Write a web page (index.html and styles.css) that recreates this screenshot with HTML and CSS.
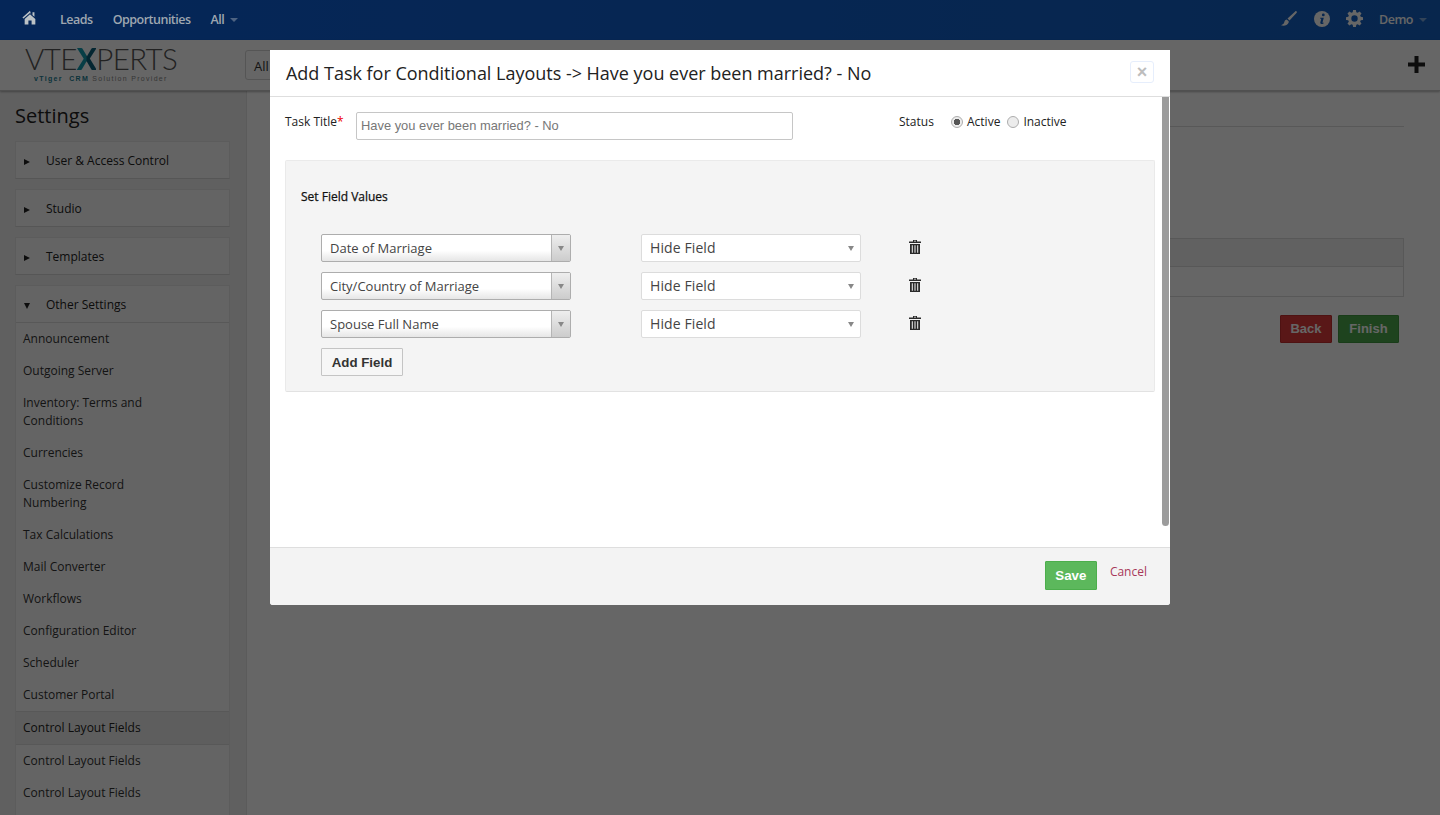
FILE: index.html
```html
<!DOCTYPE html>
<html lang="en">
<head>
<meta charset="utf-8">
<title>Add Task for Conditional Layouts</title>
<link rel="stylesheet" href="styles.css">
</head>
<body>
<div class="page">
  <nav class="topbar">
    <svg class="home" viewBox="0 0 18 16"><path d="M9 0.5 0.5 8l1.1 1.2L9 2.8l5 4.4V2h-2.2v3.2L9.9 3.4 9 .5zM9 4.4 3 9.6V16h4.2v-4.5h3.6V16H15V9.6z" fill="#bcc2c6"/></svg>
    <a class="nav-link nav-bright">Leads</a>
    <a class="nav-link nav-bright">Opportunities</a>
    <a class="nav-link nav-bright nav-all">All<i class="caret"></i></a>
    <div class="top-right">
      <svg class="ti brush" viewBox="0 0 16 16"><path d="M15.600.4c-.4-.4-1-.4-1.400 0L6.500 7.600l2 2 7.200-7.800c.3-.4.3-1-.1-1.400zM5.600 8.500C3.600 8.700 3.700 10.500 3 12c-.5 1-1.600 1.800-3 2.300 2.500 1 6.300.5 7.600-2.500.3-.8.2-1.500-.1-1.900z" fill="#fff"/></svg>
      <svg class="ti info" viewBox="0 0 16 16"><circle cx="8" cy="8" r="8" fill="#fff"/><circle cx="9.300" cy="3.900" r="1.400" fill="#0f5fc6"/><path d="M6.200 6.700h3.600L8.500 11.500c-.1.400.3.500 1.200.1l-.2.800c-1.500.8-3.600.9-3.200-.8l1-3.900-1.300-.2z" fill="#0f5fc6"/></svg>
      <svg class="ti cog" viewBox="0 0 16 16"><path fill="#fff" fill-rule="evenodd" d="M6.700 0h2.600l.4 2.200 1.300.5L12.800 1.500l1.800 1.800-1.300 1.800.6 1.300 2.100.4v2.500l-2.100.4-.6 1.300 1.300 1.800-1.800 1.800-1.800-1.300-1.300.6-.4 2.100H6.700l-.4-2.100-1.300-.6-1.800 1.300-1.800-1.800 1.300-1.800-.6-1.300L0 9.300V6.800l2.100-.4.6-1.300L1.400 3.300l1.800-1.800L5 2.700l1.300-.5zM8 5a3 3 0 1 0 0 6 3 3 0 0 0 0-6z"/></svg>
      <a class="nav-link nav-demo">Demo<i class="caret"></i></a>
    </div>
  </nav>

  <header class="subbar">
    <div class="logo">
      <div class="logo-word">VTE<span class="logo-x">X</span>PERTS</div>
      <div class="logo-tag"><b>vTiger&nbsp; CRM</b> Solution Provider</div>
    </div>
    <div class="all-box">All</div>
    <svg class="plus" viewBox="0 0 17 17"><path d="M6.500 0h4v6.500H17v4h-6.500V17h-4v-6.500H0v-4h6.500z" fill="#222"/></svg>
  </header>

  <div class="content">
    <aside class="sidebar">
      <h2 class="side-title">Settings</h2>
      <div class="acc"><div class="acc-head"><i class="tri"></i>User &amp; Access Control</div></div>
      <div class="acc"><div class="acc-head"><i class="tri"></i>Studio</div></div>
      <div class="acc"><div class="acc-head"><i class="tri"></i>Templates</div></div>
      <div class="acc acc-open">
        <div class="acc-head head-open"><i class="tri tri-down"></i>Other Settings</div>
        <a class="item">Announcement</a>
        <a class="item">Outgoing Server</a>
        <a class="item">Inventory: Terms and Conditions</a>
        <a class="item">Currencies</a>
        <a class="item">Customize Record Numbering</a>
        <a class="item">Tax Calculations</a>
        <a class="item">Mail Converter</a>
        <a class="item">Workflows</a>
        <a class="item">Configuration Editor</a>
        <a class="item">Scheduler</a>
        <a class="item">Customer Portal</a>
        <a class="item item-active">Control Layout Fields</a>
        <a class="item">Control Layout Fields</a>
        <a class="item">Control Layout Fields</a>
        <div class="item-spacer"></div>
      </div>
    </aside>
    <main class="main">
      <div class="main-rule"></div>
      <div class="bg-table">
        <div class="bg-row-head"></div>
        <div class="bg-row"></div>
      </div>
      <div class="bg-actions">
        <button class="bg-btn bg-back">Back</button>
        <button class="bg-btn bg-finish">Finish</button>
      </div>
    </main>
  </div>

  <div class="backdrop"></div>

  <section class="modal">
    <div class="modal-head">
      <h3 class="modal-title">Add Task for Conditional Layouts -&gt; Have you ever been married? - No</h3>
      <button class="close">×</button>
    </div>
    <div class="modal-body">
      <div class="modal-scroll">
        <div class="task-row">
          <label class="task-label">Task Title<span class="req">*</span></label>
          <input class="task-input" type="text" value="" placeholder="Have you ever been married? - No">
          <span class="status-label">Status</span>
          <span class="radio radio-on"></span><span class="radio-text">Active</span>
          <span class="radio radio-off"></span><span class="radio-text">Inactive</span>
        </div>
        <div class="fields">
          <div class="fields-title">Set Field Values</div>
          <div class="field-rows">
            <div class="field-row">
              <div class="combo"><span class="combo-text">Date of Marriage</span><span class="combo-arrow"><i class="dn"></i></span></div>
              <div class="hide-select"><span>Hide Field</span><i class="dn"></i></div>
              <svg class="trash" viewBox="0 0 12 14"><path d="M4 0h4v1.500h4v1.500H0V1.500h4zM5 .8v.7h2V.8zM1 4h10v10H1zM2.800 5.200v7.600h1V5.200zM5.500 5.200v7.600h1V5.200zM8.200 5.200v7.600h1V5.200z" fill="#2a2a2a" fill-rule="evenodd"/></svg>
            </div>
            <div class="field-row">
              <div class="combo"><span class="combo-text">City/Country of Marriage</span><span class="combo-arrow"><i class="dn"></i></span></div>
              <div class="hide-select"><span>Hide Field</span><i class="dn"></i></div>
              <svg class="trash" viewBox="0 0 12 14"><path d="M4 0h4v1.500h4v1.500H0V1.500h4zM5 .8v.7h2V.8zM1 4h10v10H1zM2.800 5.200v7.600h1V5.200zM5.500 5.200v7.600h1V5.200zM8.200 5.200v7.600h1V5.200z" fill="#2a2a2a" fill-rule="evenodd"/></svg>
            </div>
            <div class="field-row">
              <div class="combo"><span class="combo-text">Spouse Full Name</span><span class="combo-arrow"><i class="dn"></i></span></div>
              <div class="hide-select"><span>Hide Field</span><i class="dn"></i></div>
              <svg class="trash" viewBox="0 0 12 14"><path d="M4 0h4v1.500h4v1.500H0V1.500h4zM5 .8v.7h2V.8zM1 4h10v10H1zM2.800 5.200v7.600h1V5.200zM5.500 5.200v7.600h1V5.200zM8.200 5.200v7.600h1V5.200z" fill="#2a2a2a" fill-rule="evenodd"/></svg>
            </div>
            <button class="add-field">Add Field</button>
          </div>
        </div>
      </div>
      <div class="scrollbar"><div class="thumb"></div></div>
    </div>
    <div class="modal-foot">
      <button class="save">Save</button>
      <a class="cancel">Cancel</a>
    </div>
  </section>
</div>
</body>
</html>
```

FILE: styles.css
```css
* { box-sizing: border-box; }
html, body { margin: 0; height: 100%; overflow: hidden; }
body { font-family: "Open Sans", "Liberation Sans", sans-serif; font-size: 12px; color: #222; background: #fff; }
.page { position: relative; width: 1440px; height: 815px; overflow: hidden; display: flex; flex-direction: column; }

/* top bar */
.topbar { flex: none; height: 40px; background: linear-gradient(90deg, #0d5fdc, #145fc0); display: flex; align-items: center; padding-left: 22px; color: #fff; }
.home { width: 16px; height: 15px; margin-right: 22px; margin-top: -5px; position: relative; z-index: 6; }
.nav-link { font-size: 12.5px; font-weight: 600; color: #fff; margin-right: 20px; margin-top: -1px; letter-spacing: -.5px; }
.nav-bright { position: relative; z-index: 6; color: #9ea6b0; }
.nav-all { margin-right: 0; display: flex; align-items: center; }
.caret { display: inline-block; margin-left: 6px; margin-top: 1px; border-left: 4px solid transparent; border-right: 4px solid transparent; border-top: 4px solid rgba(255,255,255,.45); }
.nav-bright .caret { border-top-color: rgba(110,125,150,.7); }
.top-right { margin-left: auto; display: flex; align-items: center; padding-right: 13px; }
.ti { width: 16px; height: 16px; margin-right: 16px; margin-top: -3px; }
.brush { margin-right: 17px; }
.cog { width: 17px; height: 17px; margin-right: 16px; }
.nav-demo { margin-right: 0; display: flex; align-items: center; }

/* sub bar */
.subbar { flex: none; height: 51px; background: #fff; border-bottom: 1px solid #c8c8c8; box-shadow: 0 1px 2px rgba(0,0,0,.3); display: flex; align-items: flex-start; padding-left: 25px; position: relative; z-index: 1; }
.logo { width: 220px; margin-top: 6px; }
.logo-word { font-family: "Lato", sans-serif; font-weight: 300; font-size: 29.5px; line-height: 26px; letter-spacing: -.6px; color: #555; }
.logo-x { font-weight: 900; color: transparent; background: linear-gradient(90deg, #129bb0 45%, #0b5f7c 55%); -webkit-background-clip: text; background-clip: text; }
.logo-tag { font-family: "Liberation Sans", sans-serif; font-size: 7px; line-height: 9px; letter-spacing: 1.3px; color: #888; margin: 2px 0 0 9px; }
.logo-tag b { color: #1d7f95; }
.all-box { width: 60px; height: 30px; margin-top: 10px; border: 1px solid #d5d5d5; border-radius: 3px; padding: 6px 8px; font-size: 13px; color: #333; }
.plus { position: absolute; left: 1408px; top: 16px; width: 17px; height: 17px; }

/* content */
.content { flex: 1; display: flex; min-height: 0; }
.sidebar { width: 247px; flex: none; background: #f0f0f0; border-right: 1px solid #e4e4e4; padding: 0 16px 0 15px; overflow: hidden; }
.side-title { margin: 11px 0 12px; font-size: 20px; font-weight: 400; line-height: 27px; color: #222; }
.acc { background: #fbfbfb; border: 1px solid #e5e5e5; border-bottom-color: #d8d8d8; margin-bottom: 10px; }
.acc-head { height: 36px; display: flex; align-items: center; font-size: 12px; color: #222; position: relative; padding-left: 30px; }
.head-open { height: 37px; border-bottom: 1px solid #dcdcdc; }
.tri { position: absolute; left: 8px; top: 17px; border-top: 3.500px solid transparent; border-bottom: 3.500px solid transparent; border-left: 6px solid #222; }
.tri-down { top: 17px; border-left: 3.500px solid transparent; border-right: 3.500px solid transparent; border-top: 6px solid #222; border-bottom: 0; }
.item { display: block; padding: 7px 50px 7px 7px; line-height: 18px; font-size: 12px; color: #333; }
.item-active { background: #ececec; border-top: 1px solid #dcdcdc; border-bottom: 1px solid #dcdcdc; font-weight: 500; color: #222; padding: 7px 7px; }
.item-spacer { height: 32px; }

.main { flex: 1; padding: 35px 36px 0 30px; background: #fff; }
.main-rule { height: 1px; background: #dcdcdc; }
.bg-table { margin-top: 111px; border: 1px solid #dcdcdc; }
.bg-row-head { height: 28px; background: #f2f2f2; border-bottom: 1px solid #dcdcdc; }
.bg-row { height: 29px; }
.bg-actions { display: flex; justify-content: flex-end; gap: 6px; margin-top: 18px; padding-right: 5px; }
.bg-btn { height: 28px; padding: 0 0 2px; font: bold 13px "Liberation Sans", sans-serif; color: #fff; border-radius: 1px; }
.bg-back { width: 52px; background: #de3b3b; border: 1px solid #c42f2f; }
.bg-finish { width: 61px; background: #4ca94c; border: 1px solid #3f973f; }

.backdrop { position: absolute; inset: 0; background: rgba(0,0,0,.6); z-index: 5; }

/* modal */
.modal { position: absolute; left: 270px; top: 50px; width: 900px; height: 555px; background: #fff; z-index: 6; display: flex; flex-direction: column; border-radius: 0 0 3px 3px; }
.modal-head { flex: none; height: 47px; border-bottom: 1px solid #dedede; display: flex; align-items: center; justify-content: space-between; padding: 0 16px 0 16px; }
.modal-title { margin: 0; font-size: 18px; font-weight: 400; color: #222; line-height: 24px; letter-spacing: -.015px; }
.close { width: 24px; height: 22px; margin-top: -3px; padding: 0; background: #fff; border: 1px solid #e6eefc; border-radius: 3px; color: #bdbdbd; font: bold 18px/18px "Liberation Sans", sans-serif; }
.modal-body { flex: none; height: 450px; display: flex; }
.modal-scroll { flex: 1; padding: 15px 7px 0 15px; min-width: 0; }
.scrollbar { width: 8px; flex: none; }
.thumb { width: 7px; height: 429px; background: #9c9c9c; border-radius: 0 0 4px 4px; }

.task-row { height: 28px; display: flex; align-items: center; font-size: 12px; }
.task-label { width: 71px; margin-top: -9px; color: #222; }
.req { color: #e00; }
.task-input { width: 437px; height: 28px; padding: 0 4px 2px; border: 1px solid #c6c6c6; border-radius: 2px; font: 12.9px "Liberation Sans", sans-serif; outline: 0; }
.task-input::placeholder { color: #777; opacity: 1; }
.status-label { margin: -9px 0 0 106px; width: 52px; }
.radio { width: 12px; height: 12px; border-radius: 50%; margin-top: -9px; border: 1px solid #adadad; background: #ececec; flex: none; }
.radio-on { background: radial-gradient(circle, #555 0 3px, #ececec 3.500px); }
.radio-off { margin-left: 7px; }
.radio-text { margin: -9px 0 0 4px; }

.fields { margin-top: 20px; width: 870px; height: 232px; background: #f4f4f4; border: 1px solid #eaeaea; border-bottom-color: #e2e2e2; padding: 25px 15px 0 15px; border-radius: 2px; }
.fields-title { font-size: 12px; font-weight: 500; line-height: 20px; color: #111; margin-top: 1px; -webkit-text-stroke: .25px #111; }
.field-rows { margin: 27px 0 0 20px; display: flex; flex-direction: column; gap: 10px; align-items: flex-start; }
.field-row { display: flex; align-items: center; height: 28px; }
.combo { width: 250px; height: 28px; display: flex; border: 1px solid #adadad; border-radius: 2px; background: linear-gradient(#fff 60%, #e6e6e6); }
.combo-text { flex: 1; padding-left: 8px; font-size: 13px; line-height: 26px; color: #444; }
.combo-arrow { width: 19px; border-left: 1px solid #b5b5b5; background: linear-gradient(#eee, #ccc); display: flex; align-items: center; justify-content: center; }
.dn { display: block; border-left: 3.500px solid transparent; border-right: 3.500px solid transparent; border-top: 5px solid #888; }
.hide-select { width: 220px; height: 28px; margin-left: 70px; background: #fff; border: 1px solid #dcdcdc; border-radius: 2px; display: flex; align-items: center; justify-content: space-between; padding: 0 6px 2px 8px; font-size: 14px; letter-spacing: .1px; color: #444; }
.hide-select .dn { margin-top: 2px; }
.trash { width: 12px; height: 14px; margin: -2px 0 0 48px; }
.add-field { width: 82px; height: 28px; padding: 0; background: #f6f6f6; border: 1px solid #c4c4c4; border-radius: 1px; font: bold 13.3px "Liberation Sans", sans-serif; color: #333; }

.modal-foot { flex: 1; background: #f3f3f3; border-top: 1px solid #dedede; display: flex; align-items: flex-start; justify-content: flex-end; padding: 13px 23px 0 0; border-radius: 0 0 3px 3px; }
.save { width: 52px; height: 29px; padding: 0; background: #5cb85c; border: 1px solid #4cae4c; border-radius: 1px; color: #fff; font: bold 13.3px "Liberation Sans", sans-serif; }
.cancel { margin: 2px 0 0 13px; font-size: 12px; line-height: 18px; color: #a8385a; }
```
